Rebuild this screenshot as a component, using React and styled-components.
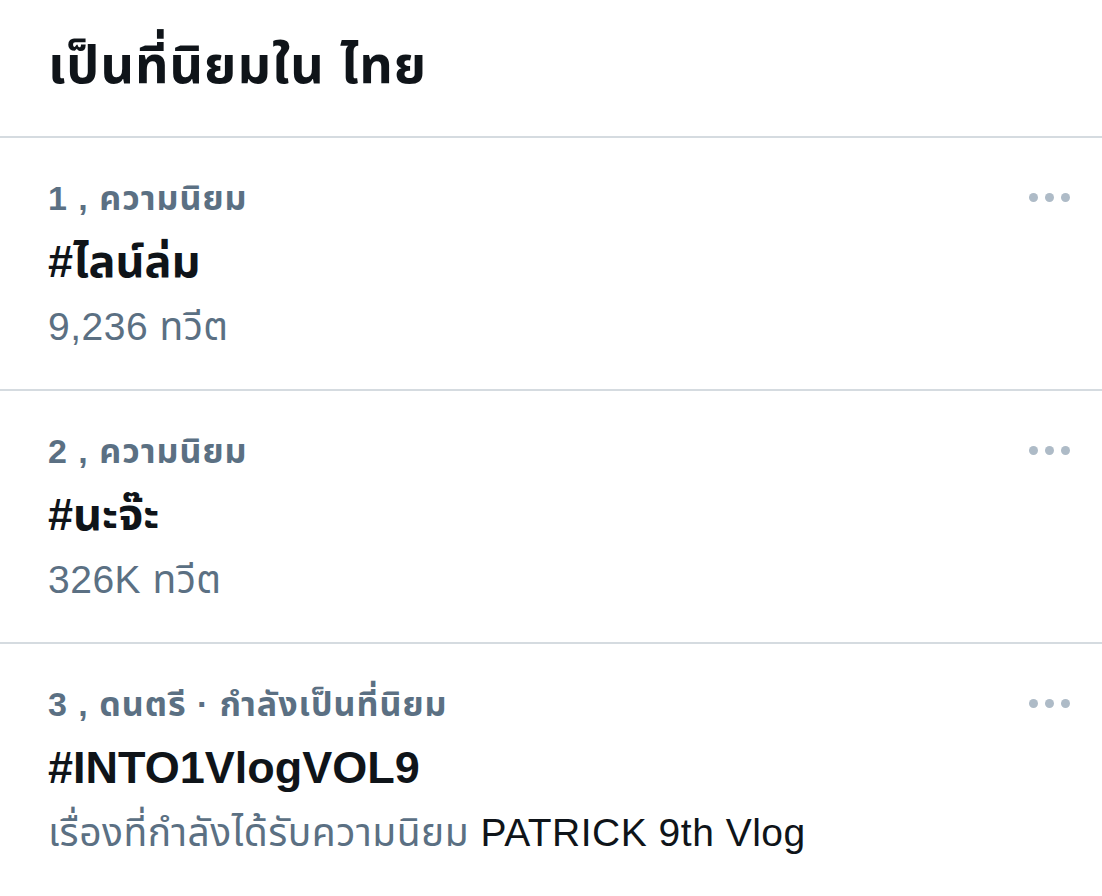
import React from 'react';
import styled, { createGlobalStyle } from 'styled-components';

const GlobalStyle = createGlobalStyle`
  html, body {
    margin: 0;
    padding: 0;
    background: #ffffff;
  }
  body {
    font-family: 'Helvetica Neue', 'Liberation Sans', 'Noto Sans', 'Noto Sans Thai', sans-serif;
    -webkit-font-smoothing: antialiased;
  }
`;

const Page = styled.div`
  width: 1102px;
  height: 896px;
  overflow: hidden;
  background: #fff;
`;

const Header = styled.div`
  height: 138px;
  box-sizing: border-box;
  display: flex;
  align-items: center;
  padding: 0 48px 2px;
  border-bottom: 2px solid #d5dbe0;
  h1 {
    margin: 0;
    font-size: 52px;
    font-weight: 700;
    letter-spacing: 1px;
    color: #0f1419;
  }
`;

const Row = styled.div`
  display: flex;
  justify-content: space-between;
  padding: 32px 32px 0 48px;
  height: 253px;
  box-sizing: border-box;
  border-bottom: ${({ last }) => (last ? 'none' : '2px solid #d5dbe0')};
`;

const Body = styled.div`
  display: flex;
  flex-direction: column;
`;

const Meta = styled.div`
  font-size: 34px;
  font-weight: 700;
  letter-spacing: 1px;
  color: #5b7083;
  line-height: 56px;
  height: 56px;
`;

const Title = styled.div`
  font-size: 45px;
  font-weight: 700;
  color: #0f1419;
  line-height: 72px;
  height: 72px;
`;

const Count = styled.div`
  font-size: 39px;
  font-weight: 400;
  letter-spacing: 0.5px;
  color: #5b7083;
  line-height: 58px;
  span {
    color: #0f1419;
  }
`;

const More = styled.div`
  display: flex;
  gap: 7px;
  padding-top: 23px;
  i {
    width: 9px;
    height: 9px;
    border-radius: 50%;
    background: #aebbc7;
  }
`;

const trends = [
  { meta: '1 , ความนิยม', title: '#ไลน์ล่ม', count: '9,236 ทวีต' },
  { meta: '2 , ความนิยม', title: '#นะจ๊ะ', count: '326K ทวีต' },
  {
    meta: '3 , ดนตรี · กำลังเป็นที่นิยม',
    title: '#INTO1VlogVOL9',
    count: 'เรื่องที่กำลังได้รับความนิยม',
    extra: 'PATRICK 9th Vlog',
  },
];

const App = () => {
  return (
    <Page>
      <GlobalStyle />
      <Header>
        <h1>เป็นที่นิยมใน ไทย</h1>
      </Header>
      {trends.map((t, i) => (
        <Row key={i} last={i === trends.length - 1}>
          <Body>
            <Meta>{t.meta}</Meta>
            <Title>{t.title}</Title>
            <Count>
              {t.count}
              {t.extra && <span> {t.extra}</span>}
            </Count>
          </Body>
          <More>
            <i />
            <i />
            <i />
          </More>
        </Row>
      ))}
    </Page>
  );
};

export default App;
